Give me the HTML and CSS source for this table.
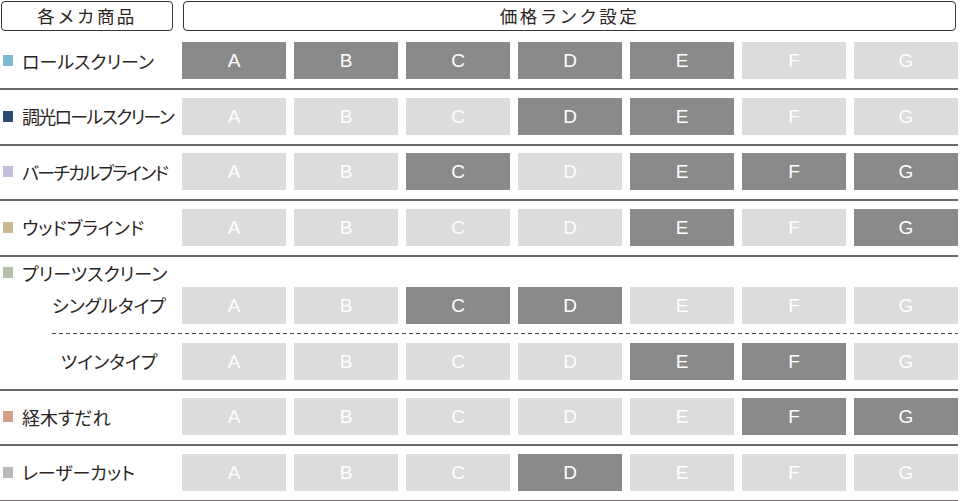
FILE: index.html
```html
<!DOCTYPE html>
<html lang="ja">
<head>
<meta charset="utf-8">
<link rel="stylesheet" href="styles.css">
</head>
<body>
<div class="sheet">
  <div class="head">
    <div class="head-box head-left">各メカ商品</div>
    <div class="head-box head-right">価格ランク設定</div>
  </div>

  <div class="row">
    <div class="label"><span class="sq sq-roll"></span>ロールスクリーン</div>
    <div class="cells">
      <span class="cell on">A</span><span class="cell on">B</span><span class="cell on">C</span><span class="cell on">D</span><span class="cell on">E</span><span class="cell">F</span><span class="cell">G</span>
    </div>
  </div>

  <div class="row">
    <div class="label tight"><span class="sq sq-dim"></span>調光ロールスクリーン</div>
    <div class="cells">
      <span class="cell">A</span><span class="cell">B</span><span class="cell">C</span><span class="cell on">D</span><span class="cell on">E</span><span class="cell">F</span><span class="cell">G</span>
    </div>
  </div>

  <div class="row">
    <div class="label tight"><span class="sq sq-vert"></span>バーチカルブラインド</div>
    <div class="cells">
      <span class="cell">A</span><span class="cell">B</span><span class="cell on">C</span><span class="cell">D</span><span class="cell on">E</span><span class="cell on">F</span><span class="cell on">G</span>
    </div>
  </div>

  <div class="row">
    <div class="label"><span class="sq sq-wood"></span>ウッドブラインド</div>
    <div class="cells">
      <span class="cell">A</span><span class="cell">B</span><span class="cell">C</span><span class="cell">D</span><span class="cell on">E</span><span class="cell">F</span><span class="cell on">G</span>
    </div>
  </div>

  <div class="group">
    <div class="group-title"><span class="sq sq-pleat"></span>プリーツスクリーン</div>
    <div class="sub">
      <div class="sub-label">シングルタイプ</div>
      <div class="cells">
        <span class="cell">A</span><span class="cell">B</span><span class="cell on">C</span><span class="cell on">D</span><span class="cell">E</span><span class="cell">F</span><span class="cell">G</span>
      </div>
    </div>
    <div class="dash"></div>
    <div class="sub">
      <div class="sub-label">ツインタイプ</div>
      <div class="cells">
        <span class="cell">A</span><span class="cell">B</span><span class="cell">C</span><span class="cell">D</span><span class="cell on">E</span><span class="cell on">F</span><span class="cell">G</span>
      </div>
    </div>
  </div>

  <div class="row">
    <div class="label"><span class="sq sq-kyogi"></span>経木すだれ</div>
    <div class="cells">
      <span class="cell">A</span><span class="cell">B</span><span class="cell">C</span><span class="cell">D</span><span class="cell">E</span><span class="cell on">F</span><span class="cell on">G</span>
    </div>
  </div>

  <div class="row">
    <div class="label"><span class="sq sq-laser"></span>レーザーカット</div>
    <div class="cells">
      <span class="cell">A</span><span class="cell">B</span><span class="cell">C</span><span class="cell on">D</span><span class="cell">E</span><span class="cell">F</span><span class="cell">G</span>
    </div>
  </div>
</div>
</body>
</html>
```

FILE: styles.css
```css
html, body {
  margin: 0;
  padding: 0;
  background: #ffffff;
}

body {
  font-family: "Noto Sans CJK JP", "Noto Sans", sans-serif;
  color: #2a2422;
}

.sheet {
  width: 958px;
  padding-top: 1px;
}

.head {
  display: flex;
  gap: 10px;
  padding-left: 1px;
}

.head-box {
  box-sizing: border-box;
  height: 30px;
  border: 1px solid #3b3331;
  border-radius: 4px;
  display: flex;
  align-items: center;
  justify-content: center;
  font-size: 17.5px;
  letter-spacing: 2.4px;
  line-height: 1;
  color: #2a2422;
}

.head-left {
  width: 172px;
}

.head-right {
  width: 773px;
}

.row {
  display: flex;
  align-items: center;
  padding: 7.6px 0 9px;
  border-bottom: 2px solid #6e6868;
}

.head + .row {
  padding-top: 11px;
}

.label {
  width: 182px;
  flex: none;
  display: flex;
  align-items: center;
  font-size: 18px;
  font-feature-settings: "palt" 1;
  line-height: 1;
  white-space: nowrap;
}

.label.tight {
  letter-spacing: -1.7px;
}

.sq {
  width: 10px;
  height: 11px;
  margin-left: 3px;
  margin-right: 9px;
  flex: none;
}

.sq-roll { background: #7db9d2; }
.sq-dim { background: #2e4a73; }
.sq-vert { background: #c2bdd9; }
.sq-wood { background: #cbb994; }
.sq-pleat { background: #b5c0a9; }
.sq-kyogi { background: #d49f87; }
.sq-laser { background: #b9b9b9; }

.cells {
  display: flex;
  gap: 8px;
}

.cell {
  width: 104px;
  height: 37px;
  background: #dcdcdc;
  color: #ffffff;
  display: flex;
  align-items: center;
  justify-content: center;
  font-family: "Liberation Sans", Arial, sans-serif;
  font-size: 19px;
  line-height: 1;
}

.cell.on {
  background: #8a8a8a;
}

.group {
  border-bottom: 2px solid #6e6868;
  padding-bottom: 9px;
}

.group-title {
  height: 30px;
  display: flex;
  align-items: center;
  padding-top: 2px;
  box-sizing: border-box;
  font-size: 18px;
  font-feature-settings: "palt" 1;
  line-height: 1;
}

.sub {
  display: flex;
  align-items: center;
}

.sub-label {
  width: 146px;
  margin-left: 36px;
  flex: none;
  text-align: center;
  font-size: 18px;
  font-feature-settings: "palt" 1;
  line-height: 1;
  white-space: nowrap;
}

.dash {
  height: 1px;
  margin: 9px 0 9px 52px;
  background: repeating-linear-gradient(to right, #4a4444 0 4px, transparent 4px 7px);
}
```
